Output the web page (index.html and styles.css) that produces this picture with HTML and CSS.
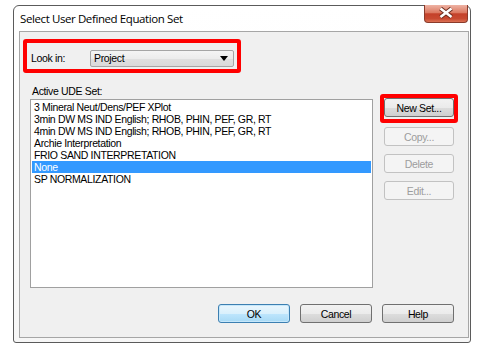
FILE: index.html
```html
<!DOCTYPE html>
<html>
<head>
<meta charset="utf-8">
<link rel="stylesheet" href="styles.css">
</head>
<body>
<div class="stage">
  <div class="window">
    <div class="titlebar">
      <span class="title">Select User Defined Equation Set</span>
      <button class="close" aria-label="Close">
        <svg width="44" height="18" viewBox="0 0 44 18">
          <path d="M16.5 4.5 L27.5 13 M27.5 4.5 L16.5 13" stroke="#6a2a1c" stroke-width="4.4" stroke-linecap="butt" fill="none"/>
          <path d="M16.5 4.5 L27.5 13 M27.5 4.5 L16.5 13" stroke="#ffffff" stroke-width="2.6" stroke-linecap="butt" fill="none"/>
        </svg>
      </button>
    </div>
    <div class="panel">
      <div class="lookin highlight">
        <span class="lookin-label">Look in:</span>
        <div class="combo">
          <span>Project</span>
          <svg class="combo-arrow" width="8" height="5" viewBox="0 0 8 5"><path d="M0 0 H8 L4 5 Z" fill="#000"/></svg>
        </div>
      </div>
      <div class="main">
        <div class="left">
          <div class="set-label">Active UDE Set:</div>
          <ul class="list">
            <li>3 Mineral Neut/Dens/PEF XPlot</li>
            <li>3min DW MS IND English; RHOB, PHIN, PEF, GR, RT</li>
            <li>4min DW MS IND English; RHOB, PHIN, PEF, GR, RT</li>
            <li>Archie Interpretation</li>
            <li>FRIO SAND INTERPRETATION</li>
            <li class="selected">None</li>
            <li>SP NORMALIZATION</li>
          </ul>
        </div>
        <div class="side">
          <div class="newwrap highlight"><button class="btn">New Set...</button></div>
          <button class="btn side-btn first" disabled>Copy...</button>
          <button class="btn side-btn" disabled>Delete</button>
          <button class="btn side-btn" disabled>Edit...</button>
        </div>
      </div>
      <div class="footer">
        <button class="btn wide default">OK</button>
        <button class="btn wide">Cancel</button>
        <button class="btn wide">Help</button>
      </div>
    </div>
  </div>
</div>
</body>
</html>
```
FILE: styles.css
```css
* { box-sizing: border-box; }
html, body { margin: 0; padding: 0; background: #ffffff; }
body {
  font-family: "Liberation Sans", Arial, sans-serif;
  font-size: 10.5px;
  letter-spacing: -0.35px;
  color: #000;
}
.stage { padding: 5px 0 0 13px; }
.window {
  width: 458px;
  height: 338px;
  border: 1px solid #5b5b5b;
  border-radius: 6px 6px 3px 3px;
  background: linear-gradient(180deg, #ffffff 0%, #fbfbfb 60%, #f6f6f6 100%);
  padding: 0 1px 4px 5px;
  display: flex;
  flex-direction: column;
}
.titlebar {
  height: 25px;
  display: flex;
  align-items: flex-start;
}
.title {
  font-family: "Open Sans", "Noto Sans", sans-serif;
  font-size: 11.5px;
  letter-spacing: -0.4px;
  line-height: 16px;
  padding: 5px 0 0 1px;
  color: #000;
}
.close {
  margin: -1px 1px 0 auto;
  width: 44px;
  height: 18px;
  padding: 0;
  border: 1px solid #8a3a2a;
  border-top: none;
  border-radius: 0 0 4px 4px;
  background: linear-gradient(180deg, #eeb3a4 0%, #dc7a62 45%, #c4412a 52%, #c84a31 80%, #dc7154 100%);
  display: block;
}
.close svg { display: block; margin: -1px 0 0 -1px; }
.panel {
  width: 450px;
  height: 307px;
  border: 1px solid #a6a6a6;
  background: #f0f0f0;
  display: flex;
  flex-direction: column;
}
.highlight {
  border: 4px solid #ff0000;
  border-radius: 3px;
}
.lookin {
  margin: 7px 0 0 3px;
  width: 218px;
  height: 34px;
  padding: 7px 3px 0 4px;
  display: flex;
  align-items: flex-start;
}
.lookin-label { line-height: 17px; }
.combo {
  margin-left: auto;
  width: 144px;
  height: 17px;
  border: 1px solid #a5a5a5;
  border-radius: 2px;
  background: linear-gradient(180deg, #f4f4f4 0%, #ececec 50%, #e0e0e0 51%, #dadada 100%);
  display: flex;
  align-items: center;
  padding: 0 5px 0 3px;
}
.combo span { line-height: 15px; }
.combo-arrow { margin-left: auto; display: block; }
.main {
  display: flex;
  align-items: flex-start;
}
.left { margin-left: 10px; }
.set-label {
  margin: 12px 0 2px 2px;
  line-height: 12px;
}
.list {
  list-style: none;
  margin: 0;
  width: 343px;
  height: 189px;
  border: 1px solid #a0a0a0;
  background: #ffffff;
  padding: 1px;
}
.list li {
  height: 12px;
  line-height: 12px;
  padding-left: 2px;
  white-space: nowrap;
}
.list li.selected { background: #3399ff; color: #fff; }
.side {
  margin: 21px 0 0 7px;
  display: flex;
  flex-direction: column;
}
.newwrap {
  width: 78px;
  height: 29px;
  padding: 0;
}
.btn {
  width: 70px;
  height: 19px;
  padding: 0;
  border: 1px solid #707070;
  border-radius: 3px;
  background: linear-gradient(180deg, #f2f2f2 0%, #ebebeb 50%, #dddddd 51%, #cfcfcf 100%);
  font-family: "Liberation Sans", Arial, sans-serif;
  font-size: 10.5px;
  letter-spacing: -0.35px;
  color: #000;
  display: block;
}
.side-btn { margin: 8px 0 0 4px; }
.side-btn.first { margin-top: 4px; }
.btn:disabled {
  border-color: #c2c2c2;
  background: #f4f4f4;
  color: #9d9d9d;
}
.footer {
  margin-top: auto;
  display: flex;
  justify-content: flex-end;
  gap: 10px;
  padding: 0 14px 14px 0;
}
.wide { width: 72px; }
.default {
  border-color: #3c7fb1;
  background: linear-gradient(180deg, #eaf6fd 0%, #d9f0fc 50%, #bee6fd 51%, #a7d9f5 100%);
  box-shadow: inset 0 0 0 1px #c6e7fa;
}
```
